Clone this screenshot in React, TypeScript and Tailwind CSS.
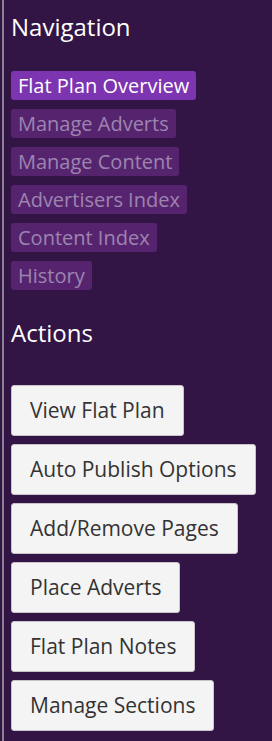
const navItems = [
  { label: "Flat Plan Overview", active: true },
  { label: "Manage Adverts", active: false },
  { label: "Manage Content", active: false },
  { label: "Advertisers Index", active: false },
  { label: "Content Index", active: false },
  { label: "History", active: false },
];

const actions = [
  "View Flat Plan",
  "Auto Publish Options",
  "Add/Remove Pages",
  "Place Adverts",
  "Flat Plan Notes",
  "Manage Sections",
];

const App = () => {
  return (
    <div className="min-h-[741px] w-[272px] bg-[#321544] pl-[2px] font-['Open_Sans',sans-serif]">
      <div className="min-h-[741px] border-l-2 border-[#8a8290] pl-[7px] pt-[10px]">
        <h2 className="text-[24px] leading-[34px] text-white">Navigation</h2>
        <ul className="mt-[27px] flex flex-col gap-[9px]">
          {navItems.map((item) => (
            <li key={item.label}>
              <span
                className={
                  item.active
                    ? "inline-flex h-[29px] items-center rounded-[3px] bg-[#7c34b0] px-[7px] text-[20px] text-white"
                    : "inline-flex h-[29px] items-center rounded-[3px] bg-[#56246f] px-[7px] text-[20px] text-[#9d84b0]"
                }
              >
                {item.label}
              </span>
            </li>
          ))}
        </ul>
        <h2 className="mt-[26px] text-[24px] leading-[34px] text-white">Actions</h2>
        <div className="mt-[35px] flex flex-col items-start gap-[8px]">
          {actions.map((label) => (
            <button
              key={label}
              className="h-[51px] rounded-[3px] border border-[#c9c4cc] bg-[#f4f4f4] px-[18px] text-[21px] text-[#333333]"
            >
              {label}
            </button>
          ))}
        </div>
      </div>
    </div>
  );
};

export default App;
